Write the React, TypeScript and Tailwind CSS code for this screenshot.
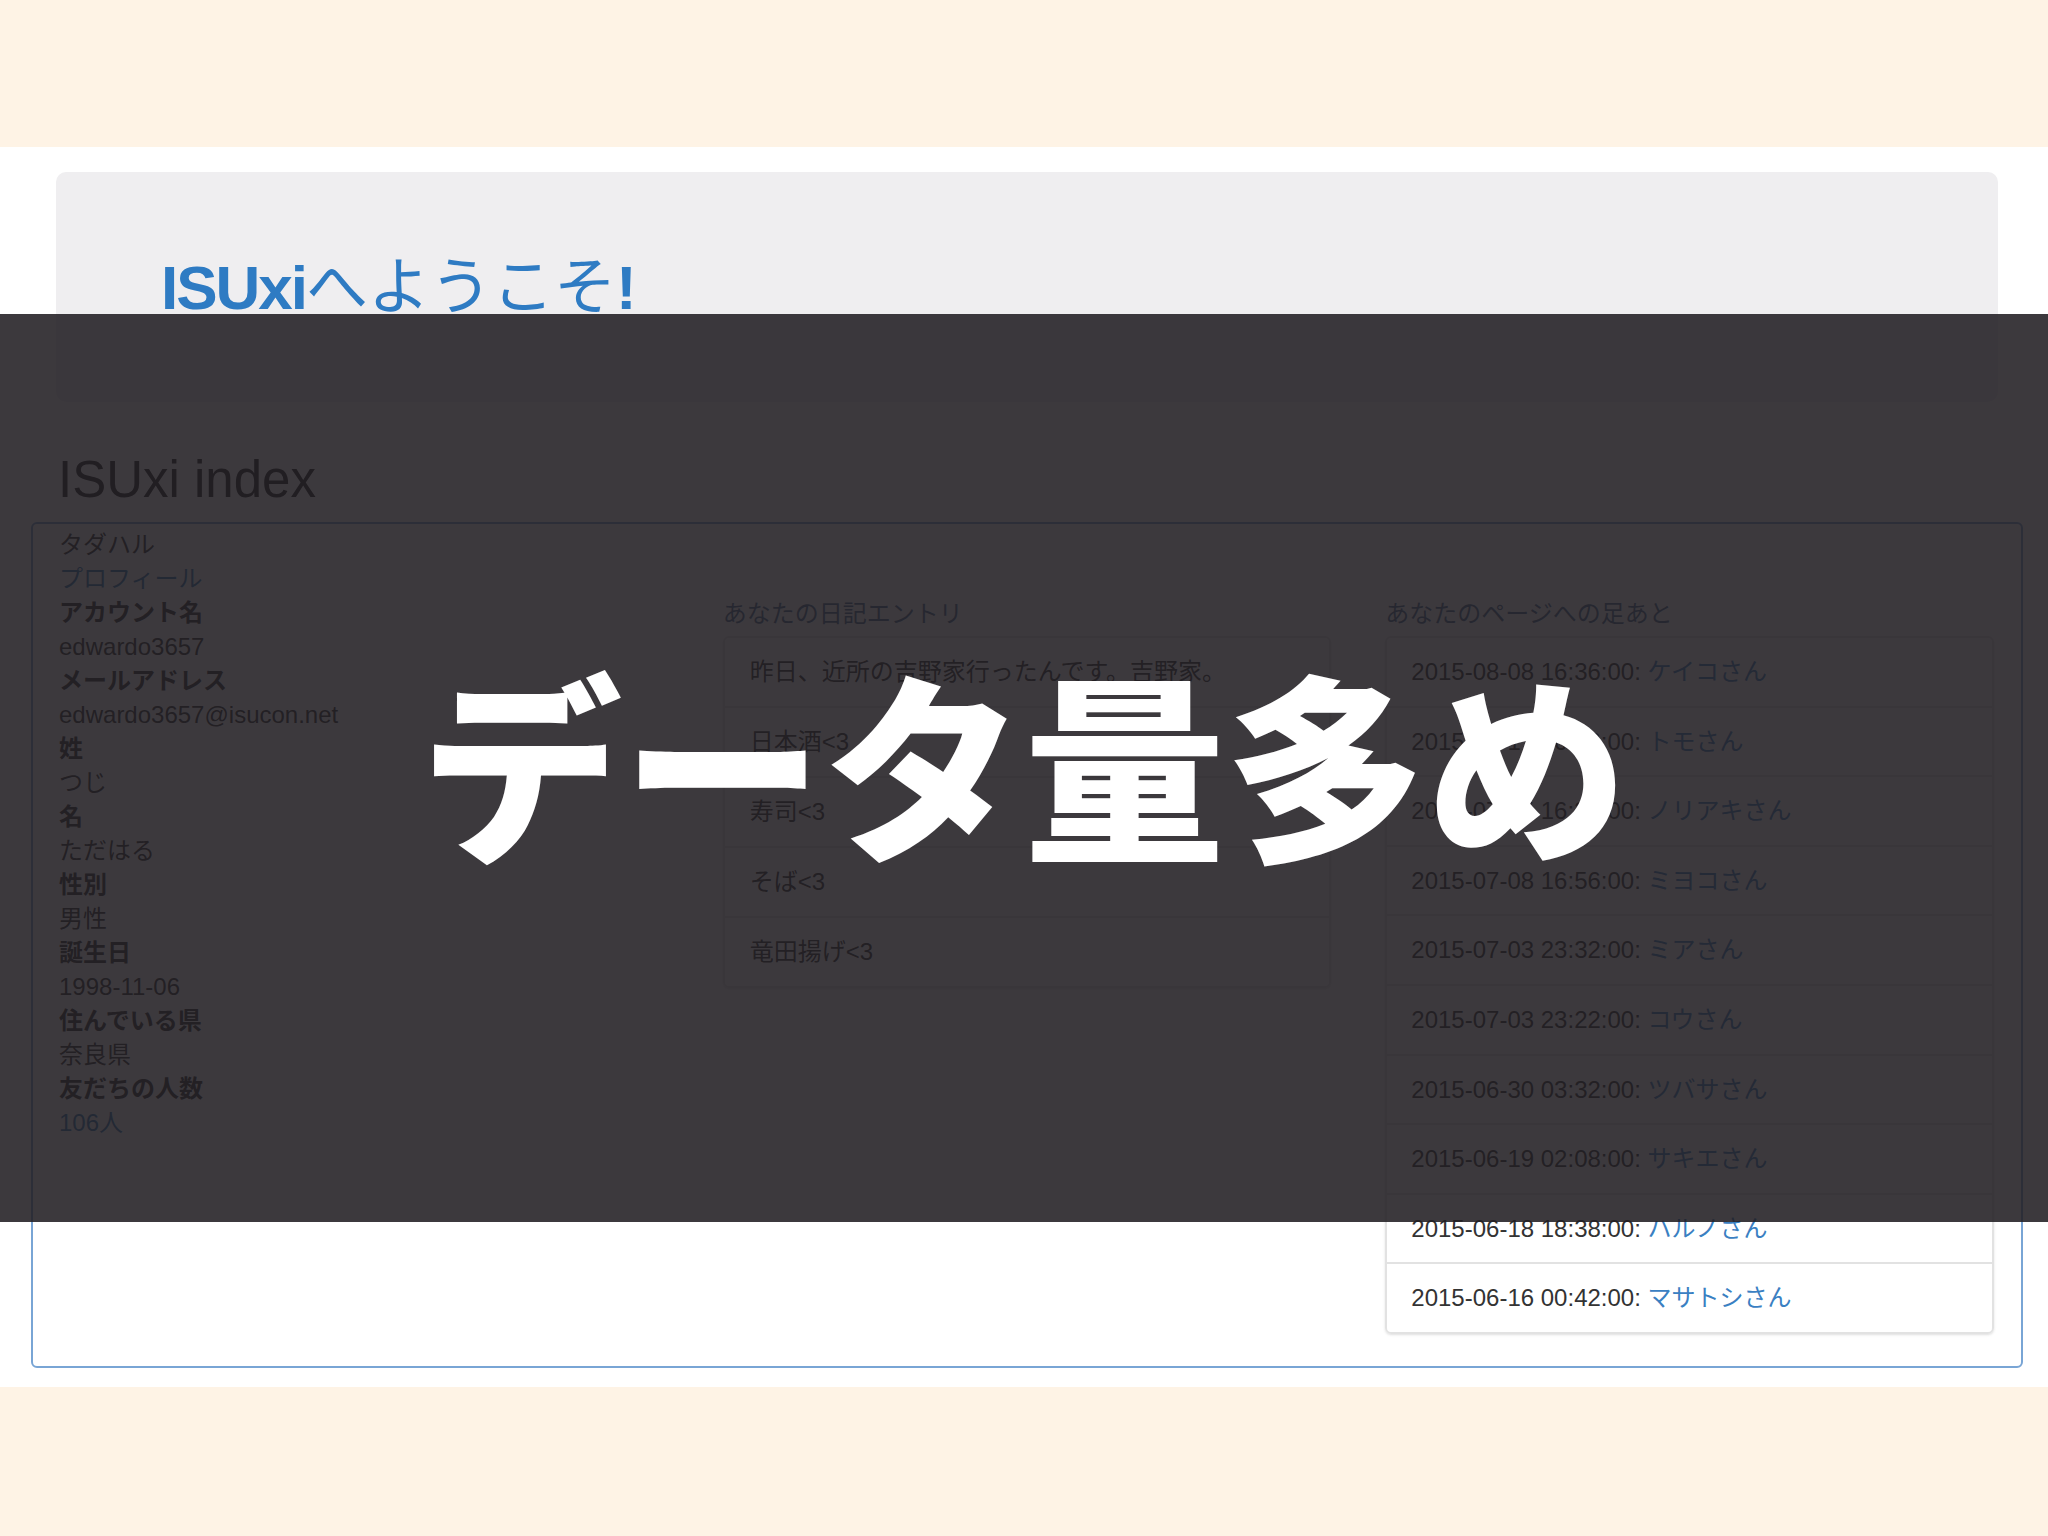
import React from "react";

const profile: { label: string; value: string; link?: boolean }[] = [
  { label: "アカウント名", value: "edwardo3657" },
  { label: "メールアドレス", value: "edwardo3657@isucon.net" },
  { label: "姓", value: "つじ" },
  { label: "名", value: "ただはる" },
  { label: "性別", value: "男性" },
  { label: "誕生日", value: "1998-11-06" },
  { label: "住んでいる県", value: "奈良県" },
  { label: "友だちの人数", value: "106人", link: true },
];

const entries = ["昨日、近所の吉野家行ったんです。吉野家。", "日本酒<3", "寿司<3", "そば<3", "竜田揚げ<3"];

const footprints = [
  ["2015-08-08 16:36:00", "ケイコさん"],
  ["2015-07-17 16:16:00", "トモさん"],
  ["2015-07-15 16:34:00", "ノリアキさん"],
  ["2015-07-08 16:56:00", "ミヨコさん"],
  ["2015-07-03 23:32:00", "ミアさん"],
  ["2015-07-03 23:22:00", "コウさん"],
  ["2015-06-30 03:32:00", "ツバサさん"],
  ["2015-06-19 02:08:00", "サキエさん"],
  ["2015-06-18 18:38:00", "ハルノさん"],
  ["2015-06-16 00:42:00", "マサトシさん"],
];

export default function App() {
  return (
    <div className="relative w-[2048px] h-[1536px] overflow-hidden bg-[#fef3e5] font-['Liberation_Sans','Noto_Sans_CJK_JP',sans-serif] text-[#333]">
      <div className="h-[147px]" />

      <div className="h-[1240px] bg-white pt-[25px]">
        {/* Jumbotron */}
        <div className="ml-[56px] w-[1942px] h-[230px] rounded-[10px] bg-[#efeef0] pl-[105px] pt-[82px]">
          <h1 className="text-[62px] leading-[68px] text-[#2e7bc3] whitespace-nowrap">
            <span className="font-bold tracking-[-2px]">ISUxi</span>へようこそ<span className="font-bold">!</span>
          </h1>
        </div>

        <h2 className="mt-[50px] ml-[58px] text-[51px] leading-[56px] text-[#222]">ISUxi index</h2>

        {/* Main panel */}
        <div className="mt-[14px] ml-[31px] w-[1992px] h-[846px] rounded-[6px] border-2 border-[#79a5d5] grid grid-cols-3">
          <div className="pl-[26px] pt-[4px] text-[24px] leading-[34px]">
            <div>タダハル</div>
            <div className="text-[#337ab7]">プロフィール</div>
            {profile.map((p) => (
              <div key={p.label}>
                <div className="font-bold">{p.label}</div>
                <div className={p.link ? "text-[#337ab7]" : ""}>{p.value}</div>
              </div>
            ))}
          </div>

          <div className="px-[27px] pt-[73px]">
            <div className="text-[24px] leading-[34px] text-[#4f6f92]">あなたの日記エントリ</div>
            <div className="mt-[5px] rounded-[6px] border-2 border-[#e2e2e2] shadow-sm">
              {entries.map((e, i) => (
                <div key={e} className={`px-[25px] py-[17px] text-[24px] leading-[34px] ${i > 0 ? "border-t-2 border-[#e2e2e2]" : ""}`}>
                  {e}
                </div>
              ))}
            </div>
          </div>

          <div className="px-[27px] pt-[73px]">
            <div className="text-[24px] leading-[34px] text-[#4f6f92]">あなたのページへの足あと</div>
            <div className="mt-[5px] rounded-[6px] border-2 border-[#e2e2e2] shadow-sm">
              {footprints.map(([d, n], i) => (
                <div key={d + n} className={`px-[24px] py-[17px] text-[24px] leading-[33.6px] whitespace-nowrap ${i > 0 ? "border-t-2 border-[#e2e2e2]" : ""}`}>
                  {d}: <span className="text-[#3a80c2]">{n}</span>
                </div>
              ))}
            </div>
          </div>
        </div>
      </div>

      {/* Slide overlay */}
      <div className="absolute left-0 right-0 top-[314px] h-[908px] bg-[rgba(33,30,34,0.88)] flex items-center justify-center">
        <div className="text-white text-[201px] leading-none font-black font-['Noto_Sans_CJK_JP',sans-serif] whitespace-nowrap pb-[18px]">
          データ量多め
        </div>
      </div>
    </div>
  );
}
